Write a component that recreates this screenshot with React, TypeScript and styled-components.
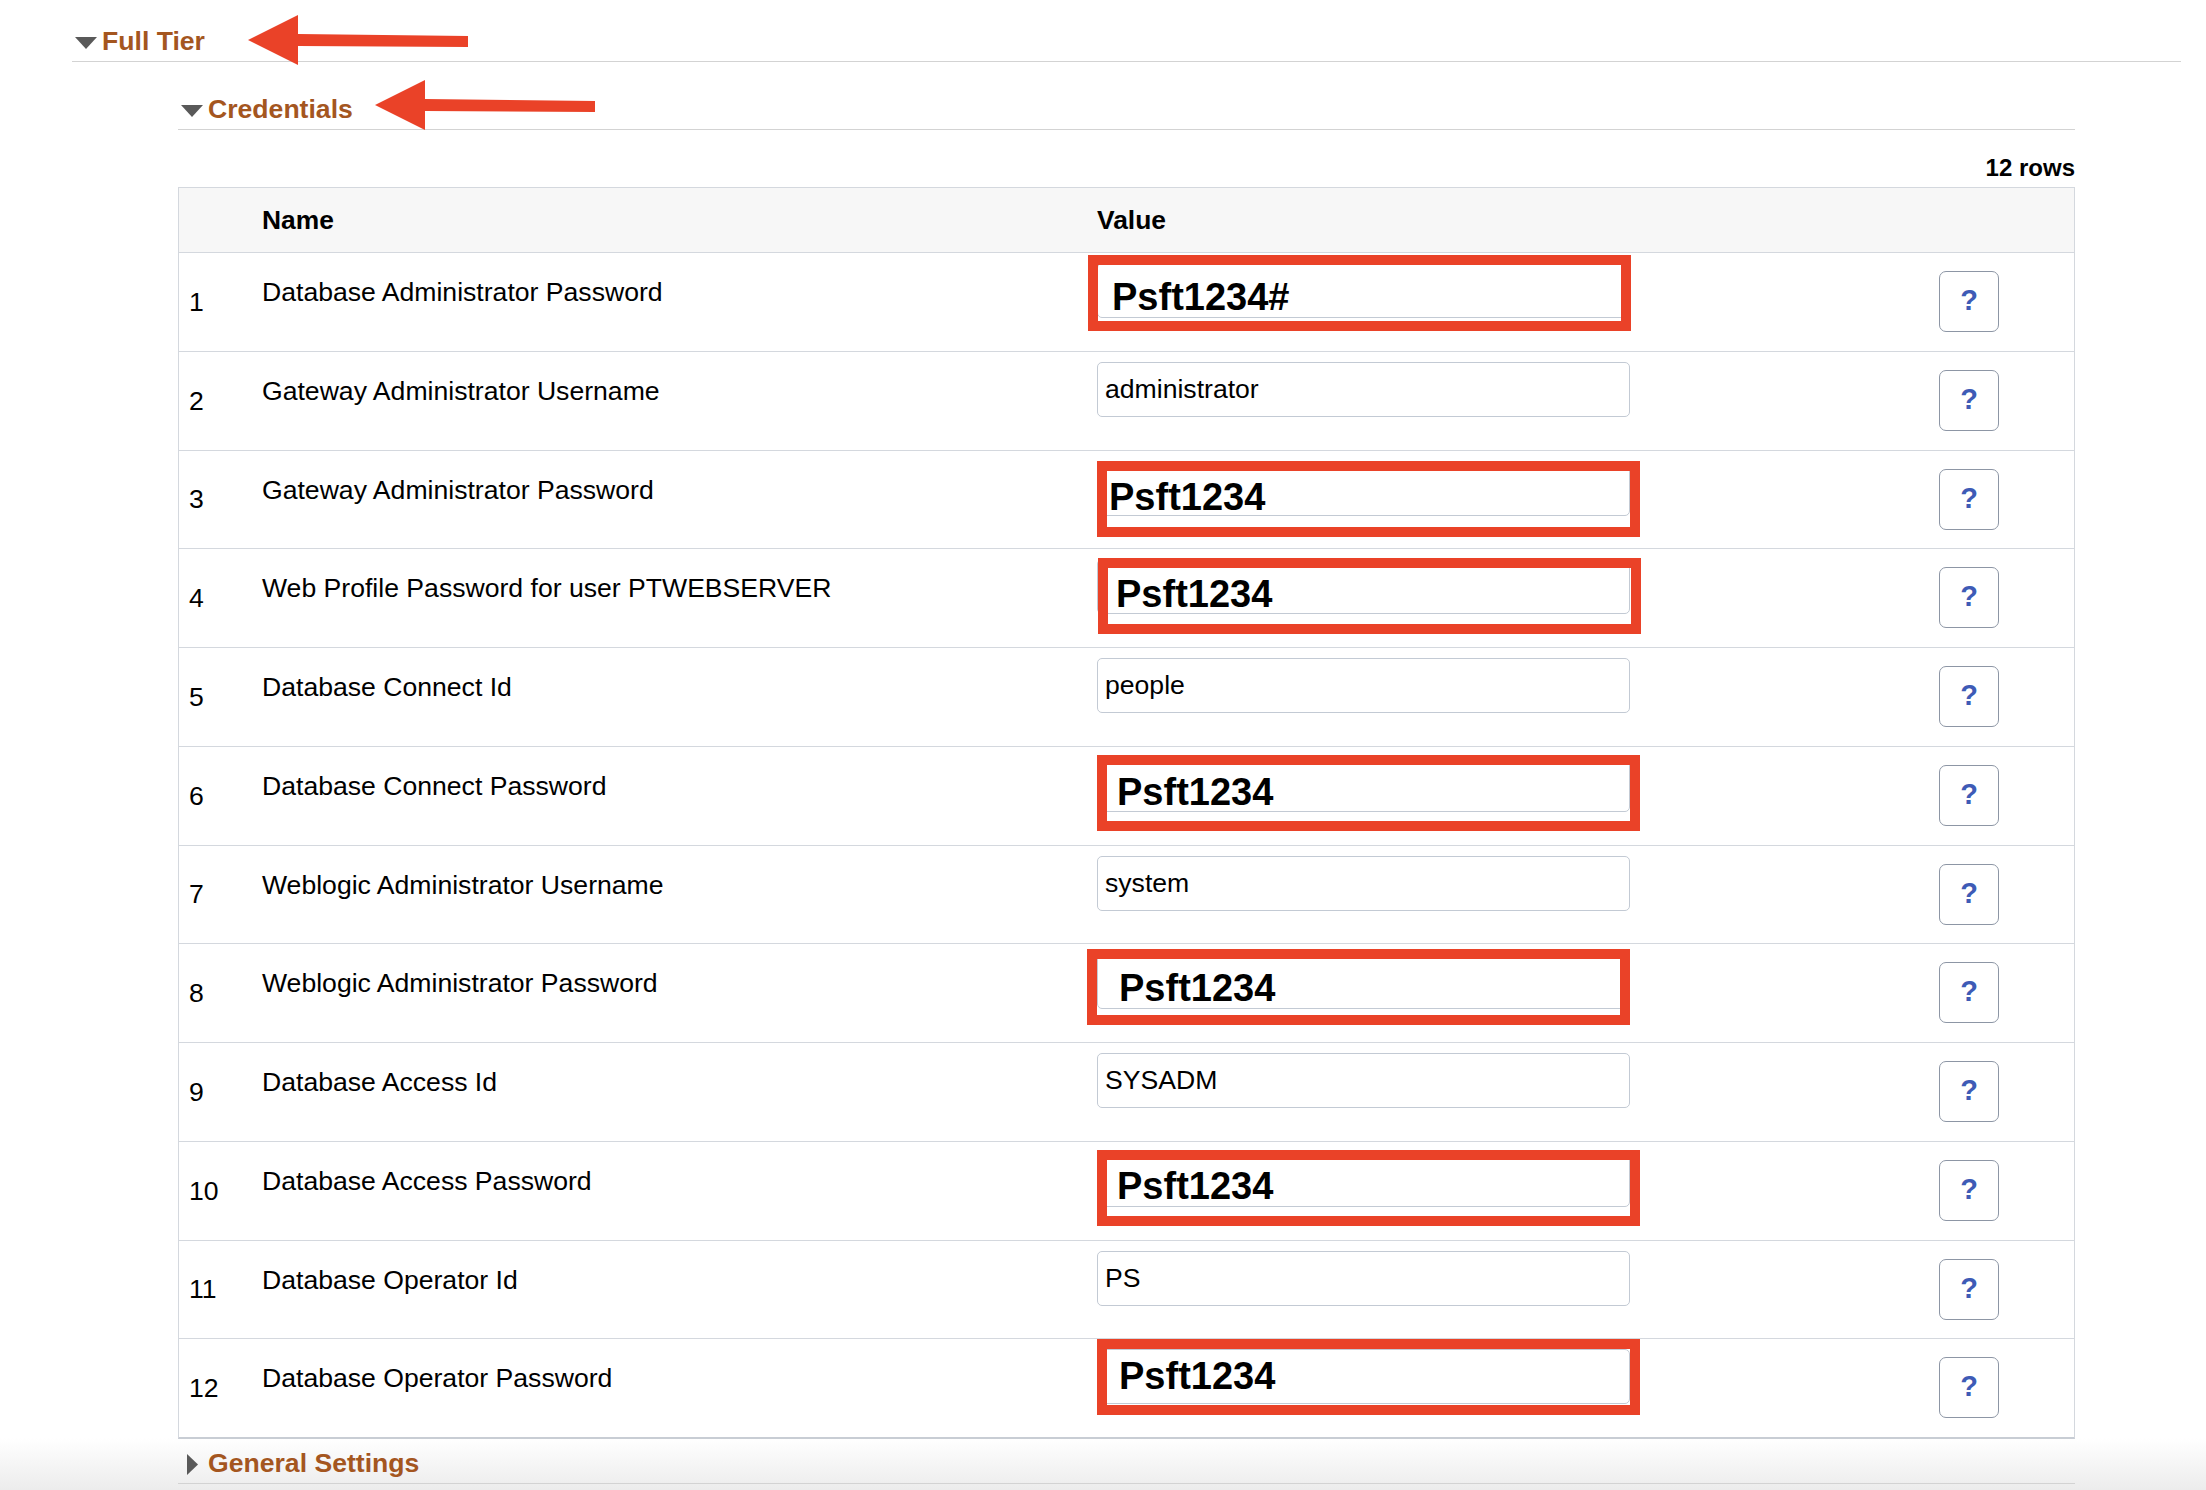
import React from 'react';
import styled, { createGlobalStyle } from 'styled-components';

const GlobalStyle = createGlobalStyle`
  html {
    min-height: 1490px;
    background: linear-gradient(to bottom, #ffffff 0, #ffffff 1438px, #ececec 1490px);
  }
  body {
    margin: 0;
    padding: 0;
    font-family: "Liberation Sans", Arial, Helvetica, sans-serif;
    color: #000;
  }
`;

const Page = styled.div`
  padding: 0 25px 0 72px;
`;

const SectionHeader = styled.div<{ $h: number }>`
  box-sizing: border-box;
  height: ${(p) => p.$h}px;
  display: flex;
  align-items: flex-end;
  padding-bottom: 5px;
  border-bottom: 1px solid #d3d3d3;
`;

const HeaderLine = styled.div`
  display: flex;
  align-items: center;
  height: 30px;
`;

const CaretBox = styled.svg`
  display: block;
  width: 22px;
  height: 30px;
  margin: 0 5px 0 3px;
  flex: none;
`;

const SectionTitle = styled.span`
  font-size: 26.6px;
  line-height: 30px;
  font-weight: bold;
  color: #a4561f;
  white-space: nowrap;
`;

const ArrowSvg = styled.svg<{ $gap: number; $shift: number }>`
  display: block;
  flex: none;
  width: 220px;
  height: 50px;
  margin: ${(p) => -10 + p.$shift}px 0 ${(p) => -10 - p.$shift}px ${(p) => p.$gap}px;
`;

const SubSection = styled.div`
  margin: 0 106px;
`;

const RowCount = styled.div`
  margin-top: 24px;
  text-align: right;
  font-size: 24px;
  line-height: 28px;
  font-weight: bold;
`;

const Table = styled.div`
  margin-top: 5px;
  border: 1px solid #d4d8de;
  border-bottom: 2px solid #c8cdd4;
`;

const Grid = styled.div`
  display: grid;
  grid-template-columns: 83px 835px 842px 1fr;
`;

const HeadRow = styled(Grid)`
  height: 64px;
  background: #f7f7f7;
`;

const DataRow = styled(Grid)`
  box-sizing: border-box;
  height: 98.75px;
  border-top: 1px solid #d4d8de;
`;

const HeadCell = styled.div`
  display: flex;
  align-items: center;
  font-size: 26.4px;
  line-height: 30px;
  font-weight: bold;
`;

const NumCell = styled.div`
  display: flex;
  align-items: center;
  padding-left: 10px;
  font-size: 26.6px;
  line-height: 30px;
`;

const NameCell = styled.div`
  padding-top: 24px;
  font-size: 26.6px;
  line-height: 30px;
  white-space: nowrap;
`;

const ValueCell = styled.div`
  position: relative;
  padding-top: 10px;
`;

const TextInput = styled.input<{ $strong: boolean; $tx: number; $ty: number }>`
  box-sizing: border-box;
  display: block;
  width: 533px;
  height: 55px;
  margin: 0;
  border: 1px solid #c3cad4;
  border-radius: 5px;
  background: #fff;
  outline: none;
  color: #000;
  font-family: "Liberation Sans", Arial, Helvetica, sans-serif;
  font-size: ${(p) => (p.$strong ? 38 : 26.6)}px;
  font-weight: ${(p) => (p.$strong ? 'bold' : 'normal')};
  padding: ${(p) => Math.max(0, 2 * p.$ty)}px 0 ${(p) => Math.max(0, -2 * p.$ty)}px ${(p) => p.$tx}px;
`;

const RedFrame = styled.div<{ $dx: number; $dy: number }>`
  position: absolute;
  left: ${(p) => p.$dx}px;
  top: ${(p) => 10 + p.$dy}px;
  box-sizing: border-box;
  width: 543px;
  height: 76px;
  border: 10px solid #ea4228;
  pointer-events: none;
`;

const HelpCell = styled.div`
  padding-top: 18px;
`;

const HelpButton = styled.button`
  box-sizing: border-box;
  width: 60px;
  height: 61px;
  margin: 0;
  padding: 0 0 2px;
  border: 1px solid #8d96a5;
  border-radius: 7px;
  background: #fff;
  color: #3e5bb6;
  font-family: "Liberation Sans", Arial, Helvetica, sans-serif;
  font-size: 29px;
  font-weight: bold;
  line-height: 1;
  cursor: pointer;
`;

type Highlight = { dx: number; dy: number; tx: number; ty: number };
type Item = { name: string; value: string; hl?: Highlight };

const rows: Item[] = [
  { name: 'Database Administrator Password', value: 'Psft1234#', hl: { dx: -9, dy: -8, tx: 14, ty: 7 } },
  { name: 'Gateway Administrator Username', value: 'administrator' },
  { name: 'Gateway Administrator Password', value: 'Psft1234', hl: { dx: 0, dy: 0, tx: 11, ty: 9 } },
  { name: 'Web Profile Password for user PTWEBSERVER', value: 'Psft1234', hl: { dx: 1, dy: -1, tx: 18, ty: 8 } },
  { name: 'Database Connect Id', value: 'people' },
  { name: 'Database Connect Password', value: 'Psft1234', hl: { dx: 0, dy: -2, tx: 19, ty: 8 } },
  { name: 'Weblogic Administrator Username', value: 'system' },
  { name: 'Weblogic Administrator Password', value: 'Psft1234', hl: { dx: -10, dy: -5, tx: 21, ty: 7 } },
  { name: 'Database Access Id', value: 'SYSADM' },
  { name: 'Database Access Password', value: 'Psft1234', hl: { dx: 0, dy: -2, tx: 19, ty: 7 } },
  { name: 'Database Operator Id', value: 'PS' },
  { name: 'Database Operator Password', value: 'Psft1234', hl: { dx: 0, dy: -10, tx: 21, ty: 0 } },
];

const Caret: React.FC<{ open: boolean }> = ({ open }) => (
  <CaretBox viewBox="0 0 22 30">
    {open ? (
      <polygon points="0,11 22,11 11,23" fill="#595959" />
    ) : (
      <polygon points="6,6 17,16.5 6,27" fill="#595959" />
    )}
  </CaretBox>
);

const Arrow: React.FC<{ gap: number; shift: number }> = ({ gap, shift }) => (
  <ArrowSvg $gap={gap} $shift={shift} viewBox="0 0 220 50">
    <polygon points="0,25 50,0 50,19 220,21 220,32 50,31 50,50" fill="#ea4228" />
  </ArrowSvg>
);

export default function App() {
  return (
    <>
      <GlobalStyle />
      <Page>
        <SectionHeader $h={62}>
          <HeaderLine>
            <Caret open />
            <SectionTitle>Full Tier</SectionTitle>
            <Arrow gap={43} shift={-1} />
          </HeaderLine>
        </SectionHeader>
        <SubSection>
          <SectionHeader $h={68}>
            <HeaderLine>
              <Caret open />
              <SectionTitle>Credentials</SectionTitle>
              <Arrow gap={22} shift={-4} />
            </HeaderLine>
          </SectionHeader>
          <RowCount>12 rows</RowCount>
          <Table>
            <HeadRow>
              <div />
              <HeadCell>Name</HeadCell>
              <HeadCell>Value</HeadCell>
              <div />
            </HeadRow>
            {rows.map((r, i) => (
              <DataRow key={i}>
                <NumCell>{i + 1}</NumCell>
                <NameCell>{r.name}</NameCell>
                <ValueCell>
                  <TextInput
                    readOnly
                    value={r.value}
                    $strong={!!r.hl}
                    $tx={r.hl ? r.hl.tx : 7}
                    $ty={r.hl ? r.hl.ty : 0}
                  />
                  {r.hl && <RedFrame $dx={r.hl.dx} $dy={r.hl.dy} />}
                </ValueCell>
                <HelpCell>
                  <HelpButton type="button">?</HelpButton>
                </HelpCell>
              </DataRow>
            ))}
          </Table>
          <SectionHeader $h={45}>
            <HeaderLine>
              <Caret open={false} />
              <SectionTitle>General Settings</SectionTitle>
            </HeaderLine>
          </SectionHeader>
        </SubSection>
      </Page>
    </>
  );
}
